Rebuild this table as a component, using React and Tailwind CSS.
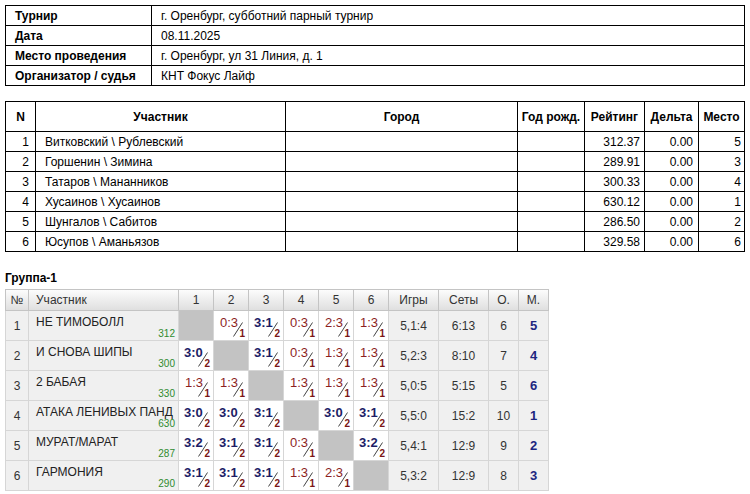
import React from 'react';

const info = [
  ['Турнир', 'г. Оренбург, субботний парный турнир'],
  ['Дата', '08.11.2025'],
  ['Место проведения', 'г. Оренбург, ул 31 Линия, д. 1'],
  ['Организатор / судья', 'КНТ Фокус Лайф'],
];

const players = [
  [1, 'Витковский \\ Рублевский', '312.37', '0.00', 5],
  [2, 'Горшенин \\ Зимина', '289.91', '0.00', 3],
  [3, 'Татаров \\ Мананников', '300.33', '0.00', 4],
  [4, 'Хусаинов \\ Хусаинов', '630.12', '0.00', 1],
  [5, 'Шунгалов \\ Сабитов', '286.50', '0.00', 2],
  [6, 'Юсупов \\ Аманьязов', '329.58', '0.00', 6],
];

// a score starting with 3 is a win (bold navy, 2 points), otherwise a loss (red, 1 point)
const group = [
  { name: 'НЕ ТИМОБОЛЛ', r: 312, res: [null, '0:3', '3:1', '0:3', '2:3', '1:3'], games: '5,1:4', sets: '6:13', pts: 6, place: 5 },
  { name: 'И СНОВА ШИПЫ', r: 300, res: ['3:0', null, '3:1', '0:3', '1:3', '1:3'], games: '5,2:3', sets: '8:10', pts: 7, place: 4 },
  { name: '2 БАБАЯ', r: 330, res: ['1:3', '1:3', null, '1:3', '1:3', '1:3'], games: '5,0:5', sets: '5:15', pts: 5, place: 6 },
  { name: 'АТАКА ЛЕНИВЫХ ПАНД', r: 630, res: ['3:0', '3:0', '3:1', null, '3:0', '3:1'], games: '5,5:0', sets: '15:2', pts: 10, place: 1 },
  { name: 'МУРАТ/МАРАТ', r: 287, res: ['3:2', '3:1', '3:1', '0:3', null, '3:2'], games: '5,4:1', sets: '12:9', pts: 9, place: 2 },
  { name: 'ГАРМОНИЯ', r: 290, res: ['3:1', '3:1', '3:1', '1:3', '2:3', null], games: '5,3:2', sets: '12:9', pts: 8, place: 3 },
];

function Score({ s }) {
  const win = s[0] === '3';
  return (
    <div className="relative h-[29px]">
      <span
        className={
          win
            ? 'absolute left-[5px] top-[2px] text-[13px] font-bold text-[#1d1d66]'
            : 'absolute left-[6px] top-[2px] text-[13px] text-[#8c1f1f]'
        }
      >
        {s}
      </span>
      <svg className="absolute left-[19px] top-[11px]" width="10" height="15" viewBox="0 0 10 15">
        <line x1="0.5" y1="14.5" x2="9.5" y2="0.5" stroke="#444" strokeWidth="1" />
      </svg>
      <span className="absolute right-[3px] bottom-[1px] text-[10px] leading-none font-bold text-[#7a1515]">
        {win ? 2 : 1}
      </span>
    </div>
  );
}

export default function App() {
  return (
    <div className="bg-white min-h-[494px] p-[5px] text-black text-[12px] font-['Liberation_Sans',Arial,sans-serif]">
      {/* Tournament info */}
      <table className="table-fixed border-collapse w-[740px]">
        <colgroup>
          <col className="w-[146px]" />
          <col />
        </colgroup>
        <tbody>
          {info.map(([k, v]) => (
            <tr key={k} className="h-[20px]">
              <td className="border border-black px-[9px] py-0 font-bold leading-[18px]">{k}</td>
              <td className="border border-black px-[9px] py-0 leading-[18px]">{v}</td>
            </tr>
          ))}
        </tbody>
      </table>

      {/* Participants */}
      <table className="table-fixed border-collapse w-[739px] mt-[15px]">
        <colgroup>
          <col className="w-[30px]" />
          <col className="w-[250px]" />
          <col className="w-[232px]" />
          <col className="w-[67px]" />
          <col className="w-[60px]" />
          <col className="w-[54px]" />
          <col className="w-[46px]" />
        </colgroup>
        <thead>
          <tr className="h-[30px] font-bold">
            <th className="border border-black">N</th>
            <th className="border border-black">Участник</th>
            <th className="border border-black">Город</th>
            <th className="border border-black">Год рожд.</th>
            <th className="border border-black">Рейтинг</th>
            <th className="border border-black">Дельта</th>
            <th className="border border-black">Место</th>
          </tr>
        </thead>
        <tbody>
          {players.map(([n, name, rating, delta, place]) => (
            <tr key={n} className="h-[20px] leading-[18px]">
              <td className="border border-black text-right pr-[6px]">{n}</td>
              <td className="border border-black pl-[9px]">{name}</td>
              <td className="border border-black"></td>
              <td className="border border-black"></td>
              <td className="border border-black text-right pr-[4px]">{rating}</td>
              <td className="border border-black text-right pr-[5px]">{delta}</td>
              <td className="border border-black text-right pr-[3px]">{place}</td>
            </tr>
          ))}
        </tbody>
      </table>

      {/* Group */}
      <div className="mt-[18px] mb-[3px] font-bold leading-[16px]">Группа-1</div>
      <table className="table-fixed border-collapse w-[543px] border border-[#a8a8a8] text-[#333]">
        <colgroup>
          <col className="w-[23px]" />
          <col className="w-[150px]" />
          {[1, 2, 3, 4, 5, 6].map((i) => (
            <col key={i} className="w-[35px]" />
          ))}
          <col className="w-[50px]" />
          <col className="w-[50px]" />
          <col className="w-[30px]" />
          <col className="w-[30px]" />
        </colgroup>
        <thead>
          <tr className="h-[21px] bg-gradient-to-b from-[#fcfcfc] to-[#dedede]">
            <th className="border border-[#c4c4c4] font-normal">№</th>
            <th className="border border-[#c4c4c4] font-normal text-left pl-[7px]">Участник</th>
            {[1, 2, 3, 4, 5, 6].map((i) => (
              <th key={i} className="border border-[#c4c4c4] font-normal">{i}</th>
            ))}
            <th className="border border-[#c4c4c4] font-normal">Игры</th>
            <th className="border border-[#c4c4c4] font-normal">Сеты</th>
            <th className="border border-[#c4c4c4] font-normal">О.</th>
            <th className="border border-[#c4c4c4] font-normal">М.</th>
          </tr>
        </thead>
        <tbody>
          {group.map((g, ri) => (
            <tr key={g.name} className="h-[29px]">
              <td className="border border-[#d6d6d6] bg-[#f0f0f0] text-center">{ri + 1}</td>
              <td className="border border-[#d6d6d6] bg-[#f0f0f0] p-0 align-top">
                <div className="relative h-[29px]">
                  <span className="absolute left-[7px] top-[2px] text-[#222]">{g.name}</span>
                  <span className="absolute right-[3px] bottom-[1px] text-[10px] leading-none text-[#2e8b2e]">{g.r}</span>
                </div>
              </td>
              {g.res.map((s, ci) =>
                s === null ? (
                  <td key={ci} className="border border-[#d6d6d6] bg-[#c3c3c3]"></td>
                ) : (
                  <td key={ci} className="border border-[#d6d6d6] bg-white p-0 align-top">
                    <Score s={s} />
                  </td>
                )
              )}
              <td className="border border-[#d6d6d6] bg-[#f0f0f0] text-center">{g.games}</td>
              <td className="border border-[#d6d6d6] bg-[#f0f0f0] text-center">{g.sets}</td>
              <td className="border border-[#d6d6d6] bg-[#f0f0f0] text-center">{g.pts}</td>
              <td className="border border-[#d6d6d6] bg-[#f0f0f0] text-center font-bold text-[13px] text-[#1d2680]">{g.place}</td>
            </tr>
          ))}
        </tbody>
      </table>
    </div>
  );
}
